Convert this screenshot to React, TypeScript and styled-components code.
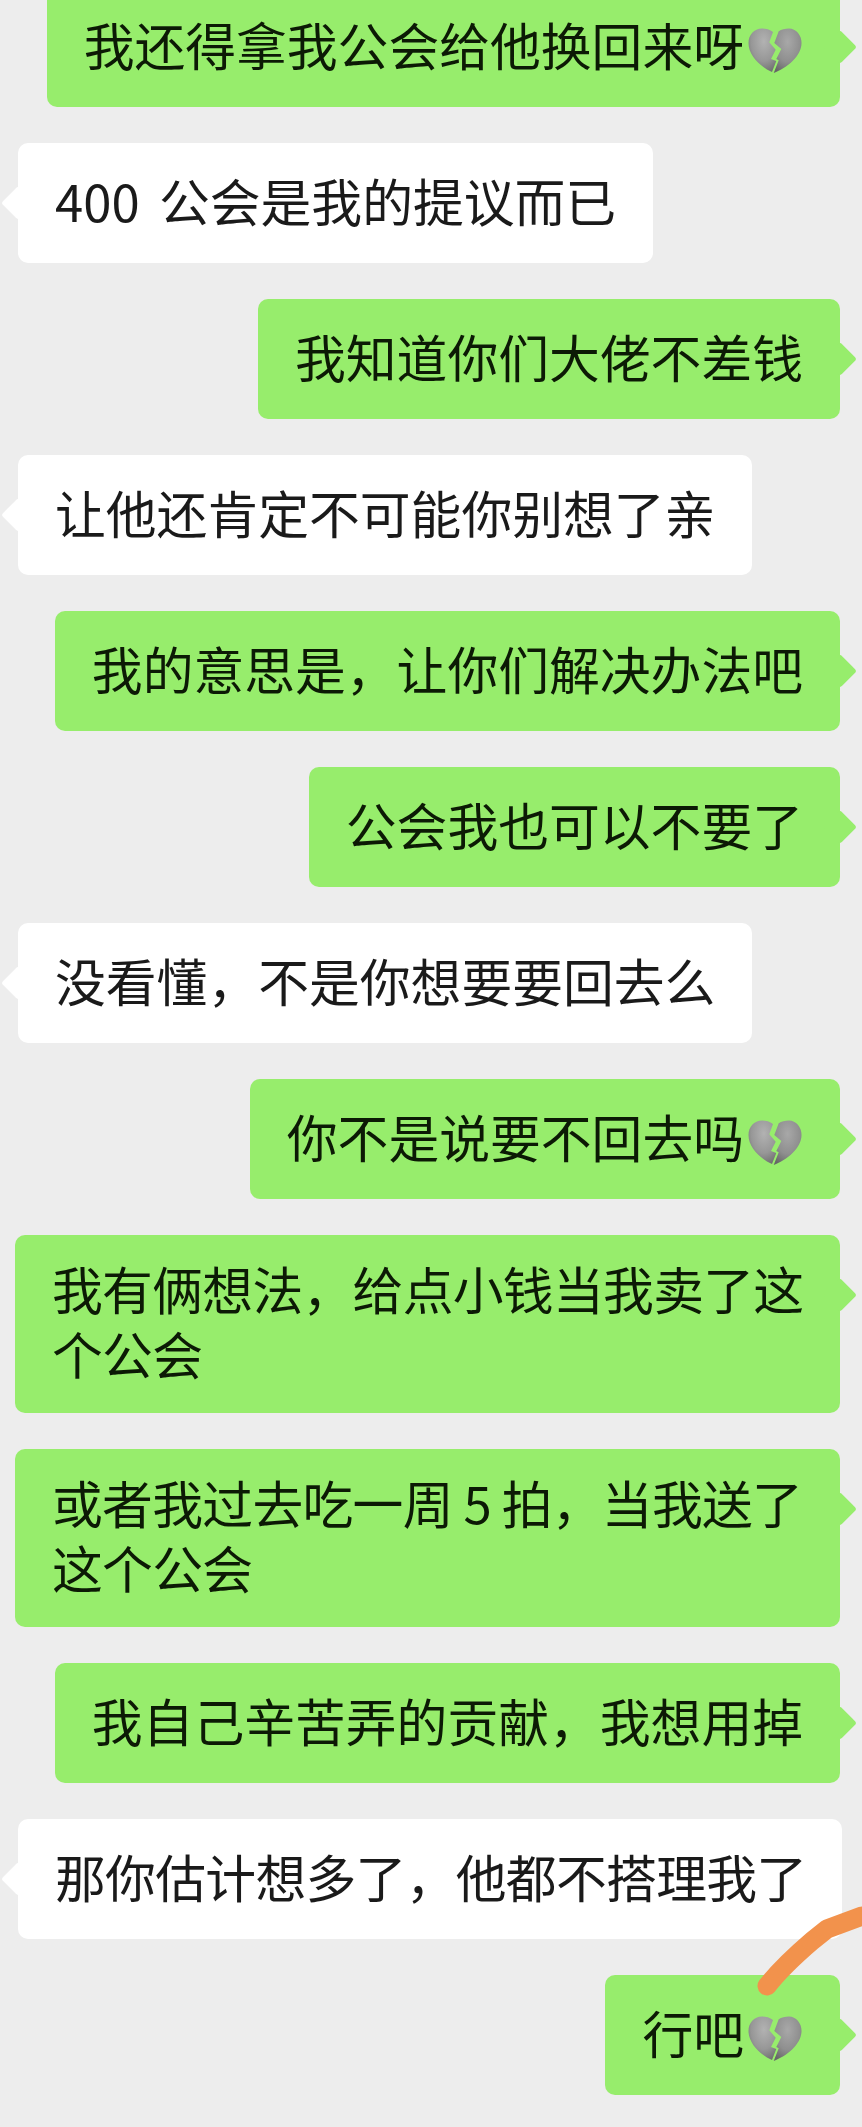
import React from 'react';
import styled, { createGlobalStyle } from 'styled-components';

const GlobalStyle = createGlobalStyle`
  html, body {
    margin: 0;
    padding: 0;
    background: #ededed;
    overflow: hidden;
  }
`;

const Screen = styled.div`
  position: relative;
  width: 862px;
  height: 2127px;
  overflow: hidden;
  background: #ededed;
  font-family: "Noto Sans CJK SC", "Liberation Sans", sans-serif;
`;

const Thread = styled.div`
  display: flex;
  flex-direction: column;
  gap: 36px;
  margin-top: -13px;
`;

const Row = styled.div<{ $mine: boolean }>`
  display: flex;
  justify-content: ${(p) => (p.$mine ? 'flex-end' : 'flex-start')};
  padding: ${(p) => (p.$mine ? '0 22px 0 15px' : '0 20px 0 18px')};
`;

const Bubble = styled.div<{ $mine: boolean; $full: boolean; $spaced: boolean }>`
  position: relative;
  display: flex;
  align-items: center;
  box-sizing: border-box;
  width: ${(p) => (p.$full ? '100%' : 'auto')};
  min-height: 120px;
  padding: 21px 37px 27px;
  border-radius: 10px;
  background: ${(p) => (p.$mine ? '#97ed6c' : '#ffffff')};
  color: ${(p) => (p.$mine ? '#0c1a05' : '#1a1a1a')};
  font-size: 50.8px;
  line-height: 65px;
  letter-spacing: ${(p) => (p.$full ? '-0.7px' : '0')};
  word-spacing: ${(p) => (p.$spaced ? '8px' : '0')};
  white-space: pre;

  &::after {
    content: '';
    position: absolute;
    top: 48px;
    ${(p) => (p.$mine ? 'right: -12px;' : 'left: -12px;')}
    width: 24px;
    height: 24px;
    border-radius: 3px;
    background: inherit;
    transform: rotate(45deg);
  }
`;

const HeartIcon = styled.svg`
  flex: none;
  width: 54px;
  height: 46px;
  margin: 13px 1px 0 4px;
`;

const Scribble = styled.svg`
  position: absolute;
  left: 740px;
  top: 1895px;
  width: 122px;
  height: 110px;
`;

// each heart gets its own gradient ids so the three copies stay independent
const BrokenHeart = ({ id }: { id: string }) => (
  <HeartIcon viewBox="0 0 54 46">
    <defs>
      <radialGradient id={`${id}-left`} cx="0.55" cy="0.3" r="0.75">
        <stop offset="0" stopColor="#b2b2b2" />
        <stop offset="0.6" stopColor="#979797" />
        <stop offset="1" stopColor="#6e6e6e" />
      </radialGradient>
      <radialGradient id={`${id}-right`} cx="0.5" cy="0.3" r="0.75">
        <stop offset="0" stopColor="#a8a8a8" />
        <stop offset="0.6" stopColor="#8f8f8f" />
        <stop offset="1" stopColor="#666666" />
      </radialGradient>
    </defs>
    <path
      d="M25 4 C22 1.5 18 0.5 14 0.5 C6 0.5 0.5 7 0.5 15 C0.5 28 13 39 24 44 L28.3 33 L23 31 L27.7 21.7 L21.3 14.3 Z"
      fill={`url(#${id}-left)`}
    />
    <path
      d="M30.7 3.3 C33.5 1.5 37 0.5 41 0.5 C48 0.5 53.5 7 53.5 15 C53.5 28 39 40 25.7 45 L30.7 32.3 L28.3 31 L33.3 21 L26.3 15 Z"
      fill={`url(#${id}-right)`}
    />
  </HeartIcon>
);

type Message = {
  mine: boolean;
  text: string;
  heart?: boolean;
  full?: boolean;
  spaced?: boolean;
};

const messages: Message[] = [
  { mine: true, text: '我还得拿我公会给他换回来呀', heart: true },
  { mine: false, text: '400 公会是我的提议而已', spaced: true },
  { mine: true, text: '我知道你们大佬不差钱' },
  { mine: false, text: '让他还肯定不可能你别想了亲' },
  { mine: true, text: '我的意思是，让你们解决办法吧' },
  { mine: true, text: '公会我也可以不要了' },
  { mine: false, text: '没看懂，不是你想要要回去么' },
  { mine: true, text: '你不是说要不回去吗', heart: true },
  { mine: true, text: '我有俩想法，给点小钱当我卖了这\n个公会', full: true },
  { mine: true, text: '或者我过去吃一周 5 拍，当我送了\n这个公会', full: true },
  { mine: true, text: '我自己辛苦弄的贡献，我想用掉' },
  { mine: false, text: '那你估计想多了，他都不搭理我了', full: true },
  { mine: true, text: '行吧', heart: true },
];

const App = () => (
  <Screen>
    <GlobalStyle />
    <Thread>
      {messages.map((m, i) => (
        <Row key={i} $mine={m.mine}>
          <Bubble $mine={m.mine} $full={!!m.full} $spaced={!!m.spaced}>
            <span>{m.text}</span>
            {m.heart && <BrokenHeart id={`heart-${i}`} />}
          </Bubble>
        </Row>
      ))}
    </Thread>
    <Scribble viewBox="0 0 122 110">
      <path
        d="M27 91 C42 72 58 58 72 46 L87 34 L122 21"
        fill="none"
        stroke="#f2924c"
        strokeWidth="19"
        strokeLinecap="round"
        strokeLinejoin="round"
      />
    </Scribble>
  </Screen>
);

export default App;
